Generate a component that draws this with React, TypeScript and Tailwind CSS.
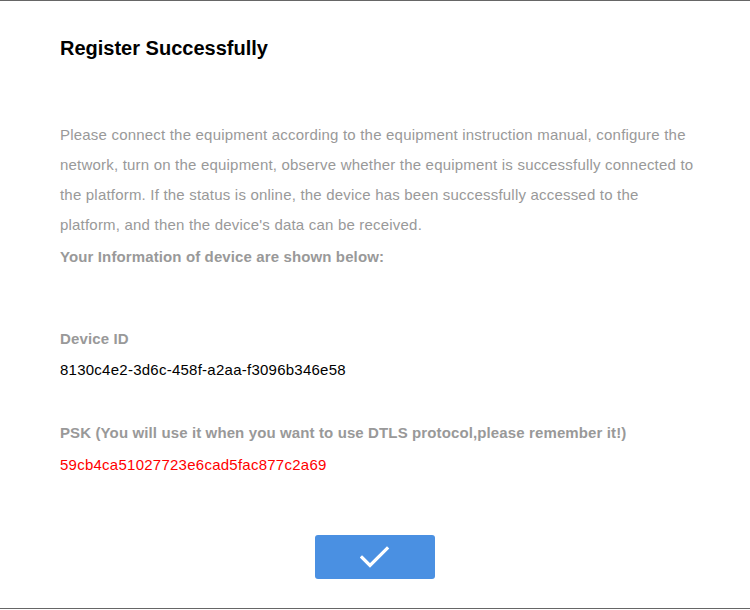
export default function App() {
  return (
    <div
      className="h-[609px] w-[750px] bg-white border-t border-b border-[#666666] pl-[60px] pr-[50px] pt-[35px] text-[15px] tracking-[0.2px]"
      style={{ fontFamily: '"Liberation Sans", Arial, sans-serif' }}
    >
      {/* Title */}
      <h2 className="text-[20px] leading-[24px] font-bold tracking-normal text-black">Register Successfully</h2>

      {/* Description */}
      <p className="mt-[60px] leading-[30px] text-[#999999]">
        Please connect the equipment according to the equipment instruction manual, configure the
        network, turn on the equipment, observe whether the equipment is successfully connected to
        the platform. If the status is online, the device has been successfully accessed to the
        platform, and then the device's data can be received.
      </p>
      <p className="mt-[2px] leading-[30px] font-bold tracking-[0.12px] text-[#999999]">
        Your Information of device are shown below:
      </p>

      {/* Device ID */}
      <div className="mt-[52px] leading-[30px] font-bold tracking-[0.12px] text-[#999999]">Device ID</div>
      <div className="mt-[1px] leading-[30px] tracking-[0.25px] text-black">8130c4e2-3d6c-458f-a2aa-f3096b346e58</div>

      {/* PSK */}
      <div className="mt-[33px] leading-[30px] font-bold tracking-[0.12px] text-[#999999]">
        PSK (You will use it when you want to use DTLS protocol,please remember it!)
      </div>
      <div className="mt-[2px] leading-[30px] tracking-[0.25px] text-[#ff0000]">59cb4ca51027723e6cad5fac877c2a69</div>

      {/* Confirm */}
      <div className="mt-[55px] mr-[10px] flex justify-center">
        <button className="flex h-[44px] w-[120px] items-center justify-center rounded-[3px] bg-[#4a90e2]">
          <svg width="30" height="24" viewBox="0 0 30 24" fill="none">
            <path d="M2 12.5 L10 20.5 L27 3.5" stroke="white" strokeWidth="3.2" strokeLinecap="square" />
          </svg>
        </button>
      </div>
    </div>
  );
}
